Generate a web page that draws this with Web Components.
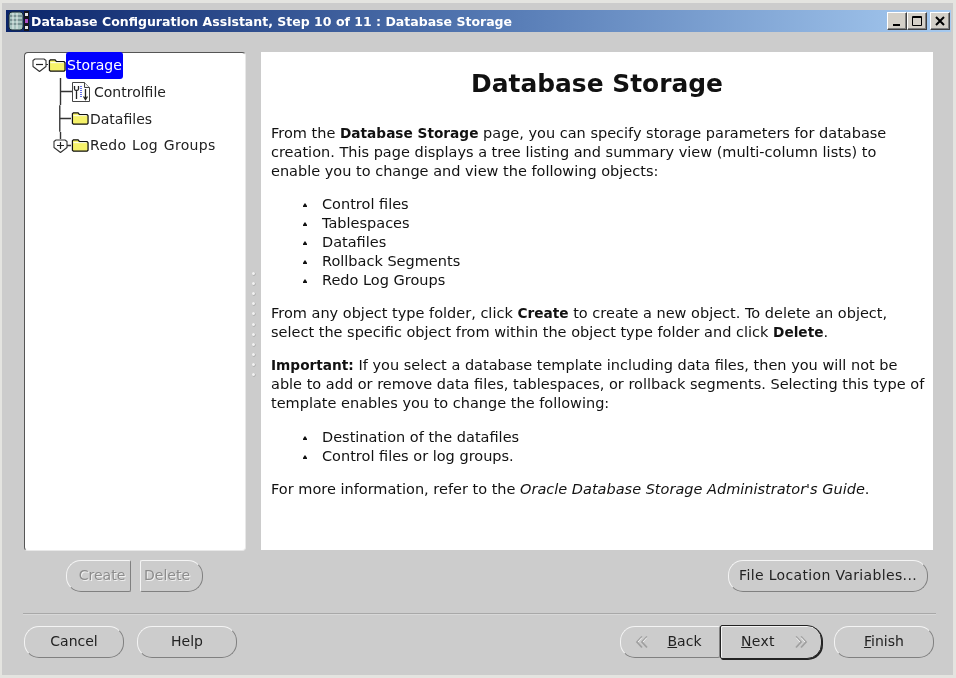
<!DOCTYPE html>
<html>
<head>
<meta charset="utf-8">
<title>Database Configuration Assistant</title>
<style>
  html, body { margin: 0; padding: 0; background: #cccccc; }
  body { font-family: "DejaVu Sans", sans-serif; font-size: 14px; color: #111; }
  help-pane b { font-size: 13.7px; }
</style>
</head>
<body>
<dbca-window>
  <title-bar slot="title">Database Configuration Assistant, Step 10 of 11 : Database Storage</title-bar>

  <tree-view slot="tree">
    <tree-row kind="open" icon="folder" selected>Storage</tree-row>
    <tree-row kind="branch" icon="file">Controlfile</tree-row>
    <tree-row kind="branch" icon="folder">Datafiles</tree-row>
    <tree-row kind="closed" icon="folder" style="letter-spacing:.3px;word-spacing:1px">Redo Log Groups</tree-row>
  </tree-view>

  <help-pane slot="help">
    <h1>Database Storage</h1>
    <p>From the <b>Database Storage</b> page, you can specify storage parameters for database creation. This page displays a tree listing and summary view (multi-column lists) to enable you to change and view the following objects:</p>
    <ul>
      <li>Control files</li>
      <li>Tablespaces</li>
      <li>Datafiles</li>
      <li>Rollback Segments</li>
      <li>Redo Log Groups</li>
    </ul>
    <p>From any object type folder, click <b>Create</b> to create a new object. To delete an object, select the specific object from within the object type folder and click <b>Delete</b>.</p>
    <p style="margin-bottom:15px"><b>Important:</b> If you select a database template including data files, then you will not be able to add or remove data files, tablespaces, or rollback segments. Selecting this type of template enables you to change the following:</p>
    <ul>
      <li>Destination of the datafiles</li>
      <li>Control files or log groups.</li>
    </ul>
    <p>For more information, refer to the <i>Oracle Database Storage Administrator's Guide</i>.</p>
  </help-pane>

  <div slot="tree-actions" style="display:flex;justify-content:center;gap:9px;padding-right:1px">
    <pill-button shape="left" disabled style="width:65px;padding-left:7px">Create</pill-button>
    <pill-button shape="right" disabled style="width:63px;padding-right:9px">Delete</pill-button>
  </div>
  <pill-button slot="help-actions" style="width:200px;letter-spacing:.35px">File Location Variables...</pill-button>

  <div slot="footer-left" style="display:flex;gap:13px">
    <pill-button style="width:100px">Cancel</pill-button>
    <pill-button style="width:100px">Help</pill-button>
  </div>
  <div slot="footer-right" style="display:flex;align-items:flex-start">
    <pill-button shape="left" arrow="back" style="width:100px;padding-right:4px"><u>B</u>ack</pill-button>
    <pill-button shape="right" arrow="next" focused style="width:102px;margin-top:-1px;padding-left:7px;letter-spacing:.3px"><u>N</u>ext</pill-button>
    <pill-button style="width:100px;margin-left:12px"><u>F</u>inish</pill-button>
  </div>
</dbca-window>

<script>
class DbcaWindow extends HTMLElement {
  constructor() {
    super();
    this.attachShadow({ mode: "open" });
    this.shadowRoot.innerHTML = `
      <style>
        :host {
          display: block;
          box-sizing: border-box;
          width: 956px;
          height: 678px;
          background: #cccccc;
          border-top: 3px solid #e4e4e0;
          border-left: 2px solid #e4e4e0;
          border-right: 3px solid #e4e4e0;
          border-bottom: 3px solid #e4e4e0;
          padding: 7px 2px 0 4px;
          overflow: hidden;
          filter: blur(0.35px);
        }
        .split {
          display: grid;
          grid-template-columns: 222px 15px 672px;
          height: 499px;
          margin: 20px 0 0 18px;
        }
        .sash {
          display: flex;
          flex-direction: column;
          justify-content: center;
          align-items: center;
          gap: 7.2px;
          padding-top: 45px;
        }
        .sash i {
          width: 3px;
          height: 3px;
          border-radius: 50%;
          background: #f2f2f2;
          box-shadow: 0.5px 0.5px 0 #9a9a9a;
        }
        .actions {
          display: grid;
          grid-template-columns: 222px 15px 667px;
          margin: 9px 0 0 18px;
          height: 31px;
        }
        .help-actions { display: flex; justify-content: flex-end; }
        hr {
          border: 0;
          height: 2px;
          background: #a8a8a8;
          border-bottom: 1px solid #d8d8d8;
          margin: 22px 0 0 17px;
          width: 913px;
          box-sizing: border-box;
        }
        .footer {
          display: flex;
          justify-content: space-between;
          margin: 11px 0 0 18px;
          width: 910px;
        }
      </style>
      <slot name="title"></slot>
      <div class="split">
        <slot name="tree"></slot>
        <div class="sash">${"<i></i>".repeat(11)}</div>
        <slot name="help"></slot>
      </div>
      <div class="actions">
        <slot name="tree-actions"></slot>
        <span></span>
        <div class="help-actions"><slot name="help-actions"></slot></div>
      </div>
      <hr>
      <div class="footer">
        <slot name="footer-left"></slot>
        <slot name="footer-right"></slot>
      </div>
    `;
  }
}

class TitleBar extends HTMLElement {
  constructor() {
    super();
    this.attachShadow({ mode: "open" });
    this.shadowRoot.innerHTML = `
      <style>
        :host {
          display: flex;
          align-items: center;
          height: 22px;
          width: 945px;
          background: linear-gradient(90deg, #0a246a 0%, #5a7fb8 55%, #a6caf0 100%);
          color: #fff;
          font: bold 12.52px "DejaVu Sans", sans-serif;
        }
        svg.logo { margin-left: 2px; flex: none; }
        .text { flex: 1; white-space: nowrap; }
        .btns { display: flex; margin-right: 1px; }
        .btn {
          box-sizing: border-box;
          width: 20px;
          height: 18px;
          background: #d4d0c8;
          border: 1px solid;
          border-color: #fff #404040 #404040 #fff;
          box-shadow: inset -1px -1px 0 #808080;
          display: flex;
          align-items: center;
          justify-content: center;
        }
        .btn.close { margin-left: 3px; }
      </style>
      <svg class="logo" width="23" height="20" viewBox="0 0 23 20">
        <rect x="1" y="1" width="14" height="18" rx="3" fill="#a8c4c0" stroke="#1c2c34"/>
        <path d="M2 5h12M2 9h12M2 13h12" stroke="#4c6468"/>
        <path d="M5 2v16M9 2v16" stroke="#e8f0ee"/>
        <rect x="16" y="0" width="5" height="20" fill="#16161e"/>
        <rect x="17" y="2" width="3" height="3" fill="#e8e8e8"/>
        <rect x="17" y="8" width="3" height="4" fill="#b050c8"/>
        <rect x="17" y="15" width="3" height="3" fill="#e8e8e8"/>
      </svg>
      <span class="text"><slot></slot></span>
      <div class="btns">
        <div class="btn"><svg width="12" height="12"><rect x="2" y="9" width="7" height="2" fill="#000"/></svg></div>
        <div class="btn"><svg width="12" height="12"><path d="M1.5 1.5h9v9h-9z M1 2.5h10" fill="none" stroke="#000"/></svg></div>
        <div class="btn close"><svg width="12" height="12"><path d="M2 2l8 8M10 2l-8 8" stroke="#000" stroke-width="2"/></svg></div>
      </div>
    `;
  }
}

class TreeView extends HTMLElement {
  constructor() {
    super();
    this.attachShadow({ mode: "open" });
    this.shadowRoot.innerHTML = `
      <style>
        :host {
          display: block;
          box-sizing: border-box;
          background: #fff;
          border: 1px solid;
          border-color: #555 #e8e8e8 #e8e8e8 #555;
          border-radius: 4px;
          padding: 0 0 0 7px;
        }
        ::slotted(tree-row:first-child) { margin-top: -1px; }
      </style>
      <slot></slot>
    `;
  }
}

const FOLDER = `<svg width="18" height="15" viewBox="0 0 19 15">
  <path d="M1.5 4V2.5l1-1h5l1.5 2h8l1 1v8l-1 1H2.5l-1-1z" fill="#f6f26a" stroke="#111" stroke-width="1.3"/>
  <path d="M2.5 4.5h14" stroke="#fff"/>
</svg>`;

const DOC = `<svg width="18" height="20" viewBox="0 0 18 20">
  <path d="M.5.5h12l5 5v14H.5z" fill="#fff" stroke="#444"/>
  <path d="M12.5.5v5h5" fill="#eee" stroke="#444"/>
  <path d="M2.5 4v3c0 2 4 2 4 0V4M4.5 9v8" fill="none" stroke="#222" stroke-width="1.3"/>
  <path d="M9 4v11" stroke="#2030e0" stroke-dasharray="1 1" stroke-width="1.4"/>
  <path d="M13.5 7v10M11.5 14.5l2 3 2-3" fill="none" stroke="#222" stroke-width="1.3"/>
</svg>`;

function shield(sign) {
  return `<path d="M1 2.5 L3 1h9l2 1.5v6l-6.5 5L1 8.5z" fill="#fff" stroke="#333" stroke-linejoin="round" stroke-width="1.1"/>
    <path d="${sign}" stroke="#222" stroke-width="1.2"/>`;
}

class TreeRow extends HTMLElement {
  constructor() {
    super();
    this.attachShadow({ mode: "open" });
    const kind = this.getAttribute("kind");
    const selected = this.hasAttribute("selected");
    const isFile = this.getAttribute("icon") === "file";
    const icon = isFile ? DOC : FOLDER;
    let prefix = "";
    if (kind === "open") {
      prefix = `<svg width="16" height="27" viewBox="0 0 16 27">
        <g transform="translate(0 6)">${shield("M4 6.5h7")}<path d="M14 6.5h2" stroke="#333" stroke-width="1.2"/></g>
      </svg>`;
    } else if (kind === "branch") {
      prefix = `<svg width="${isFile ? 40 : 39}" height="27" viewBox="0 0 40 27">
        <path d="M28.5 0v27M28 13.5h12" stroke="#333" stroke-width="1.4"/>
      </svg>`;
    } else {
      prefix = `<svg width="39" height="27" viewBox="0 0 39 27">
        <path d="M28.5 0v7M34 13.5h5" stroke="#333" stroke-width="1.4"/>
        <g transform="translate(21 7)">${shield("M4 6.5h7M7.5 3v7")}</g>
      </svg>`;
    }
    this.shadowRoot.innerHTML = `
      <style>
        :host { display: flex; align-items: center; height: 26.67px; white-space: nowrap; }
        .icon { display: flex; flex: none; }
        .label { padding: 0 1px; color: #222; }
        .label.sel {
          display: flex;
          align-items: center;
          height: 27px;
          padding: 0 1px;
          background: #0000ff;
          color: #fff;
          border-radius: 3px;
        }
        .label.doc { margin-left: 3px; }
      </style>
      ${prefix}
      <span class="icon">${icon}</span>
      <span class="label ${selected ? "sel" : ""} ${isFile ? "doc" : ""}"><slot></slot></span>
    `;
  }
}

class HelpPane extends HTMLElement {
  constructor() {
    super();
    this.attachShadow({ mode: "open" });
    this.shadowRoot.innerHTML = `
      <style>
        :host {
          display: block;
          box-sizing: border-box;
          background: #fff;
          padding: 15px 6px 0 10px;
          height: 498px;
          font-size: 14.5px;
          line-height: 19px;
          color: #111;
        }
        ::slotted(h1) {
          margin: 0 0 23px;
          text-align: center;
          font-size: 24.9px;
          line-height: 34px;
          font-weight: bold;
          padding-right: 4px;
        }
        ::slotted(p) { margin: 0 0 14px; }
        ::slotted(ul) {
          margin: 0 0 14px;
          padding: 0 0 0 51px;
          list-style: none;
        }
      </style>
      <slot></slot>
    `;
    this.querySelectorAll("li").forEach(li => {
      const bullet = document.createElement("span");
      bullet.style.cssText = "display:inline-block;width:4px;height:4px;margin-left:-19px;margin-right:15px;vertical-align:2px;background:#111;clip-path:polygon(50% 0,100% 70%,100% 100%,0 100%,0 70%)";
      li.prepend(bullet);
    });
  }
}

class PillButton extends HTMLElement {
  constructor() {
    super();
    this.attachShadow({ mode: "open" });
    const shape = this.getAttribute("shape");
    const arrow = this.getAttribute("arrow");
    const radius = shape === "left" ? "15px 2px 2px 15px" : shape === "right" ? "2px 15px 15px 2px" : "15px";
    const focused = this.hasAttribute("focused");
    const disabled = this.hasAttribute("disabled");
    const back = `<svg width="14" height="14" viewBox="0 0 14 14"><path d="M7 1.5L2 7l5 5.5M12 1.5L7 7l5 5.5" fill="none" stroke="#a0a0a0" stroke-width="1.8"/><path d="M7 2.5L3 7M12 2.5L8 7" stroke="#f4f4f4"/></svg>`;
    const next = `<svg width="14" height="14" viewBox="0 0 14 14"><path d="M2 1.5L7 7l-5 5.5M7 1.5L12 7l-5 5.5" fill="none" stroke="#a0a0a0" stroke-width="1.8"/><path d="M2 2.5L6 7M7 2.5L11 7" stroke="#f4f4f4"/></svg>`;
    this.shadowRoot.innerHTML = `
      <style>
        :host {
          display: flex;
          box-sizing: border-box;
          height: ${focused ? 34 : 32}px;
          align-items: center;
          justify-content: center;
          gap: ${arrow ? 19 : 0}px;
          border: 1px solid;
          border-color: ${focused ? "#222" : "#f4f4f4 #808080 #808080 #f4f4f4"};
          border-radius: ${radius};
          box-shadow: ${focused ? "inset 1px 1px 0 #f4f4f4, 1px 1px 0 #222" : "none"};
          background: #cccccc;
          color: ${disabled ? "#8c8c8c" : "#222"};
          text-shadow: ${disabled ? "1px 1px 0 #f0f0f0" : "none"};
          font-family: "DejaVu Sans", sans-serif;
          font-size: 14px;
          white-space: nowrap;
        }
        span { position: relative; top: -1px; }
      </style>
      ${arrow === "back" ? back : ""}
      <span><slot></slot></span>
      ${arrow === "next" ? next : ""}
    `;
  }
}

customElements.define("dbca-window", DbcaWindow);
customElements.define("title-bar", TitleBar);
customElements.define("tree-view", TreeView);
customElements.define("tree-row", TreeRow);
customElements.define("help-pane", HelpPane);
customElements.define("pill-button", PillButton);
</script>
</body>
</html>
